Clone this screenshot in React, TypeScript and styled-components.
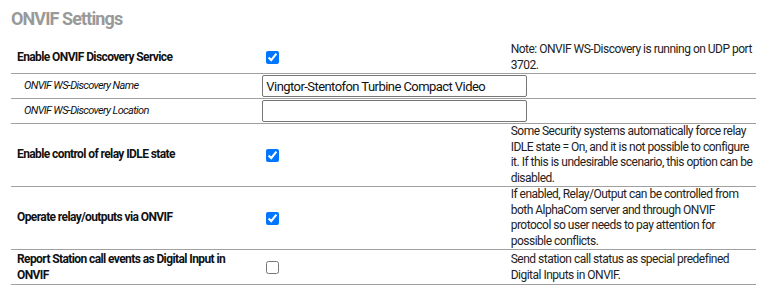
import React, { useState } from 'react';
import styled, { createGlobalStyle } from 'styled-components';

const GlobalStyle = createGlobalStyle`
    body {
        margin: 0;
        background: #ffffff;
        font-family: Roboto, "Liberation Sans", sans-serif;
        color: #222;
    }
`;

const Page = styled.div`
    padding: 8px 14px 0 11px;
`;

const Title = styled.h2`
    margin: 0 0 11px 0;
    font-size: 18px;
    line-height: 22px;
    font-weight: bold;
    letter-spacing: -0.9px;
    color: #999;
`;

const SettingsTable = styled.table`
    width: 745px;
    table-layout: fixed;
    border-collapse: collapse;
    font-size: 12px;
`;

const Row = styled.tr`
    border-bottom: 1px solid #a0a0a0;

    &:first-child td {
        padding-top: 1px;
    }

    &:last-child td {
        padding-top: 2px;
        padding-bottom: 1px;
    }
`;

const Cell = styled.td`
    padding: 0 3px;
    line-height: 15.5px;
    vertical-align: middle;
`;

const Label = styled(Cell)<{ $sub?: boolean }>`
    padding-left: ${p => (p.$sub ? '13px' : '6px')};
    font-weight: ${p => (p.$sub ? 'normal' : 'bold')};
    font-style: ${p => (p.$sub ? 'italic' : 'normal')};
    font-size: ${p => (p.$sub ? '11px' : '12px')};
    letter-spacing: ${p => (p.$sub ? '-0.65px' : '-0.6px')};
    color: #111;
`;

const Note = styled(Cell)`
    letter-spacing: -0.5px;
    color: #222;
`;

const Check = styled.input`
    margin: 3px 3px 3px 4px;
    width: 13px;
    height: 13px;
    vertical-align: middle;
`;

const TextBox = styled.input`
    box-sizing: border-box;
    width: 265px;
    height: 22px;
    margin: 1px 0;
    padding: 1px 3px;
    border: 1px solid #767676;
    border-radius: 2px;
    font-family: Roboto, "Liberation Sans", sans-serif;
    font-size: 13px;
    letter-spacing: -0.56px;
    color: #111;
    display: block;
`;

type Setting =
    | { kind: 'check'; label: string; checked: boolean; note: string }
    | { kind: 'text'; label: string; value: string };

const settings: Setting[] = [
    {
        kind: 'check',
        label: 'Enable ONVIF Discovery Service',
        checked: true,
        note: 'Note: ONVIF WS-Discovery is running on UDP port 3702.',
    },
    { kind: 'text', label: 'ONVIF WS-Discovery Name', value: 'Vingtor-Stentofon Turbine Compact Video' },
    { kind: 'text', label: 'ONVIF WS-Discovery Location', value: '' },
    {
        kind: 'check',
        label: 'Enable control of relay IDLE state',
        checked: true,
        note: 'Some Security systems automatically force relay IDLE state = On, and it is not possible to configure it. If this is undesirable scenario, this option can be disabled.',
    },
    {
        kind: 'check',
        label: 'Operate relay/outputs via ONVIF',
        checked: true,
        note: 'If enabled, Relay/Output can be controlled from both AlphaCom server and through ONVIF protocol so user needs to pay attention for possible conflicts.',
    },
    {
        kind: 'check',
        label: 'Report Station call events as Digital Input in ONVIF',
        checked: false,
        note: 'Send station call status as special predefined Digital Inputs in ONVIF.',
    },
];

const SettingRow: React.FC<{ s: Setting }> = ({ s }) => {
    const [checked, setChecked] = useState(s.kind === 'check' ? s.checked : false);
    const [value, setValue] = useState(s.kind === 'text' ? s.value : '');

    if (s.kind === 'text') {
        return (
            <Row>
                <Label $sub>{s.label}</Label>
                <Cell>
                    <TextBox type="text" value={value} onChange={e => setValue(e.target.value)} />
                </Cell>
                <Note />
            </Row>
        );
    }

    return (
        <Row>
            <Label>{s.label}</Label>
            <Cell>
                <Check type="checkbox" checked={checked} onChange={e => setChecked(e.target.checked)} />
            </Cell>
            <Note>{s.note}</Note>
        </Row>
    );
};

const App: React.FC = () => {
    return (
        <Page>
            <GlobalStyle />
            <Title>ONVIF Settings</Title>
            <SettingsTable>
                <tbody>
                    {settings.map(s => (
                        <SettingRow key={s.label} s={s} />
                    ))}
                </tbody>
            </SettingsTable>
        </Page>
    );
};

export default App;
